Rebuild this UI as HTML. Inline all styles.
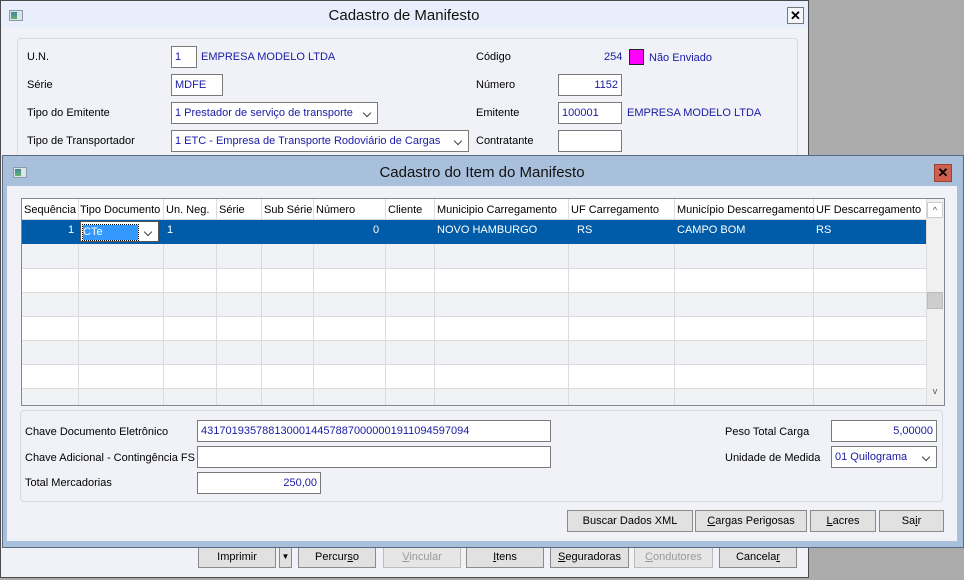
<!DOCTYPE html>
<html><head><meta charset="utf-8"><style>
*{box-sizing:border-box;margin:0;padding:0}
body{width:964px;height:580px;background:#ababab;font-family:"Liberation Sans",sans-serif;font-size:11px;color:#000;position:relative;overflow:hidden}
.a{position:absolute;white-space:nowrap}
.inp{position:absolute;background:#fff;border:1px solid #7a7a7a;height:22px;line-height:20px;padding:0 3px;color:#1a1aa6;font-size:11px;white-space:nowrap;overflow:hidden}
.sel::after{content:"";position:absolute;right:7px;top:7px;width:5px;height:5px;border-right:1.3px solid #444;border-bottom:1.3px solid #444;transform:rotate(45deg)}
.blue{color:#1a1aa6}
.btn{position:absolute;height:22px;background:#e1e1e1;border:1px solid #8a8a8a;text-align:center;line-height:20px;font-size:11px;color:#000}
.dis{color:#9a9a9a;border-color:#bcbcbc;background:#e6e6e6}
.col{position:absolute;top:0;bottom:0;border-left:1px solid #dcdcdc}
</style></head><body>
<!-- main window -->
<div class="a" style="left:0;top:0;width:809px;height:578px;background:#f0f2f8;border:1px solid #4a4a4a"></div>
<div class="a" style="left:1px;top:1px;width:807px;height:27px;background:#e8eefb"></div>
<div class="a" style="left:9px;top:10px;width:14px;height:11px;background:#dde3ea;border:1px solid #8a9aa8"><div style="position:absolute;left:1px;top:1px;width:6px;height:7px;background:linear-gradient(#3a8a9a,#6ab06a)"></div></div>
<div class="a" style="left:0;top:7px;width:808px;text-align:center;font-size:15px;color:#111">Cadastro de Manifesto</div>
<div class="a" style="left:787px;top:7px;width:17px;height:17px;border:1px solid #777;background:#f4f6fa;text-align:center;font-weight:bold;font-size:13px;line-height:15px">✕</div>
<div class="a" style="left:17px;top:38px;width:781px;height:130px;border:1px solid #d6dbe4;border-radius:4px;background:#f0f2f8"></div>
<div class="a" style="left:27px;top:51px">U.N.</div>
<div class="inp" style="left:171px;top:46px;width:26px">1</div>
<div class="a blue" style="left:201px;top:51px">EMPRESA MODELO LTDA</div>
<div class="a" style="left:27px;top:79px">Série</div>
<div class="inp" style="left:171px;top:74px;width:52px">MDFE</div>
<div class="a" style="left:27px;top:107px">Tipo do Emitente</div>
<div class="inp sel" style="left:171px;top:102px;width:207px">1 Prestador de serviço de transporte</div>
<div class="a" style="left:27px;top:135px">Tipo de Transportador</div>
<div class="inp sel" style="left:171px;top:130px;width:298px">1 ETC - Empresa de Transporte Rodoviário de Cargas</div>
<div class="a" style="left:476px;top:51px">Código</div>
<div class="a blue" style="left:604px;top:51px">254</div>
<div class="a" style="left:629px;top:49px;width:15px;height:16px;background:#ff00ff;border:1px solid #222"></div>
<div class="a blue" style="left:649px;top:52px">Não Enviado</div>
<div class="a" style="left:476px;top:79px">Número</div>
<div class="inp" style="left:558px;top:74px;width:64px;text-align:right">1152</div>
<div class="a" style="left:476px;top:107px">Emitente</div>
<div class="inp" style="left:558px;top:102px;width:64px">100001</div>
<div class="a blue" style="left:627px;top:107px">EMPRESA MODELO LTDA</div>
<div class="a" style="left:476px;top:135px">Contratante</div>
<div class="inp" style="left:558px;top:130px;width:64px"></div>
<!-- main bottom buttons -->
<div class="btn" style="left:198px;top:546px;width:78px">Imprimir</div>
<div class="btn" style="left:279px;top:546px;width:13px;font-size:8px">▼</div>
<div class="btn" style="left:298px;top:546px;width:78px">Percur<u>s</u>o</div>
<div class="btn dis" style="left:383px;top:546px;width:78px"><u>V</u>incular</div>
<div class="btn" style="left:466px;top:546px;width:78px"><u>I</u>tens</div>
<div class="btn" style="left:550px;top:546px;width:79px"><u>S</u>eguradoras</div>
<div class="btn dis" style="left:634px;top:546px;width:79px"><u>C</u>ondutores</div>
<div class="btn" style="left:719px;top:546px;width:78px">Cancela<u>r</u></div>
<!-- second window -->
<div class="a" style="left:2px;top:155px;width:962px;height:393px;background:#a9c0dc;border:1px solid #5a6a80"></div>
<div class="a" style="left:13px;top:167px;width:14px;height:11px;background:#dde3ea;border:1px solid #8a9aa8"><div style="position:absolute;left:1px;top:1px;width:6px;height:7px;background:linear-gradient(#3a8a9a,#6ab06a)"></div></div>
<div class="a" style="left:0;top:164px;width:964px;text-align:center;font-size:15px;color:#111">Cadastro do Item do Manifesto</div>
<div class="a" style="left:934px;top:164px;width:18px;height:18px;background:#d0604e;border:1px solid #a04030;text-align:center;font-weight:bold;font-size:13px;line-height:16px">✕</div>
<div class="a" style="left:7px;top:186px;width:950px;height:355px;background:#f0f2f8"></div>
<!-- grid -->
<div class="a" style="left:21px;top:198px;width:924px;height:208px;background:#fff;border:1px solid #828790;overflow:hidden">
 <div class="a" style="left:0;top:0;width:904px;height:21px;background:#fff;border-bottom:1px solid #dcdcdc"></div>
 <div class="a" style="left:0;top:21px;width:904px;height:24px;background:#005ca8"></div>
 <div class="a" style="left:0;top:45px;width:904px;height:24px;background:#f0f2f6"></div>
 <div class="a" style="left:0;top:69px;width:904px;height:24px;background:#fff;border-top:1px solid #dcdcdc"></div>
 <div class="a" style="left:0;top:93px;width:904px;height:24px;background:#f0f2f6;border-top:1px solid #dcdcdc"></div>
 <div class="a" style="left:0;top:117px;width:904px;height:24px;background:#fff;border-top:1px solid #dcdcdc"></div>
 <div class="a" style="left:0;top:141px;width:904px;height:24px;background:#f0f2f6;border-top:1px solid #dcdcdc"></div>
 <div class="a" style="left:0;top:165px;width:904px;height:24px;background:#fff;border-top:1px solid #dcdcdc"></div>
 <div class="a" style="left:0;top:189px;width:904px;height:24px;background:#f0f2f6;border-top:1px solid #dcdcdc"></div>
 <div class="col" style="left:56px"></div><div class="col" style="left:141px"></div><div class="col" style="left:194px"></div><div class="col" style="left:239px"></div><div class="col" style="left:291px"></div><div class="col" style="left:363px"></div><div class="col" style="left:412px"></div><div class="col" style="left:546px"></div><div class="col" style="left:652px"></div><div class="col" style="left:791px"></div>
 <div class="a" style="left:0;top:21px;width:904px;height:24px;background:#005ca8"></div>
 <div class="a" style="left:2px;top:5px">Sequência</div><div class="a" style="left:58px;top:5px">Tipo Documento</div><div class="a" style="left:144px;top:5px">Un. Neg.</div><div class="a" style="left:197px;top:5px">Série</div><div class="a" style="left:242px;top:5px">Sub Série</div><div class="a" style="left:294px;top:5px">Número</div><div class="a" style="left:366px;top:5px">Cliente</div><div class="a" style="left:415px;top:5px">Municipio Carregamento</div><div class="a" style="left:549px;top:5px">UF Carregamento</div><div class="a" style="left:655px;top:5px">Município Descarregamento</div><div class="a" style="left:794px;top:5px">UF Descarregamento</div>
 <div class="a" style="left:46px;top:25px;color:#fff">1</div>
 <div class="inp sel" style="left:58px;top:22px;width:79px;height:21px;border-color:#555;color:#fff;padding:0 2px"><span style="background:#3399ff;outline:1px dotted #000;display:inline-block;width:55px;line-height:15px;margin-top:2px">CTe</span></div>
 <div class="a" style="left:145px;top:25px;color:#fff">1</div>
 <div class="a" style="left:351px;top:25px;color:#fff">0</div>
 <div class="a" style="left:415px;top:25px;color:#fff">NOVO HAMBURGO</div>
 <div class="a" style="left:555px;top:25px;color:#fff">RS</div>
 <div class="a" style="left:655px;top:25px;color:#fff">CAMPO BOM</div>
 <div class="a" style="left:794px;top:25px;color:#fff">RS</div>
 <div class="a" style="left:904px;top:0;width:18px;height:206px;background:#f0f0f0;border-left:1px solid #ddd"></div>
 <div class="a" style="left:905px;top:3px;width:16px;height:16px;border:1px solid #ccc;background:#fff;text-align:center;font-size:9px;color:#555;line-height:14px">^</div>
 <div class="a" style="left:905px;top:93px;width:16px;height:17px;background:#cdcdcd;border:1px solid #bbb"></div>
 <div class="a" style="left:905px;top:187px;width:16px;height:16px;text-align:center;font-size:9px;color:#555">v</div>
</div>
<!-- bottom panel -->
<div class="a" style="left:20px;top:410px;width:923px;height:92px;border:1px solid #d6dbe4;border-radius:4px"></div>
<div class="a" style="left:25px;top:426px">Chave Documento Eletrônico</div>
<div class="inp" style="left:197px;top:420px;width:354px">43170193578813000144578870000001911094597094</div>
<div class="a" style="left:25px;top:452px">Chave Adicional - Contingência FS</div>
<div class="inp" style="left:197px;top:446px;width:354px"></div>
<div class="a" style="left:25px;top:477px">Total Mercadorias</div>
<div class="inp" style="left:197px;top:472px;width:124px;text-align:right">250,00</div>
<div class="a" style="left:725px;top:426px">Peso Total Carga</div>
<div class="inp" style="left:831px;top:420px;width:106px;text-align:right">5,00000</div>
<div class="a" style="left:725px;top:452px">Unidade de Medida</div>
<div class="inp sel" style="left:831px;top:446px;width:106px">01 Quilograma</div>
<div class="btn" style="left:567px;top:510px;width:126px">Buscar Dados XML</div>
<div class="btn" style="left:695px;top:510px;width:112px"><u>C</u>argas Perigosas</div>
<div class="btn" style="left:810px;top:510px;width:66px"><u>L</u>acres</div>
<div class="btn" style="left:879px;top:510px;width:65px">Sa<u>i</u>r</div>
</body></html>
